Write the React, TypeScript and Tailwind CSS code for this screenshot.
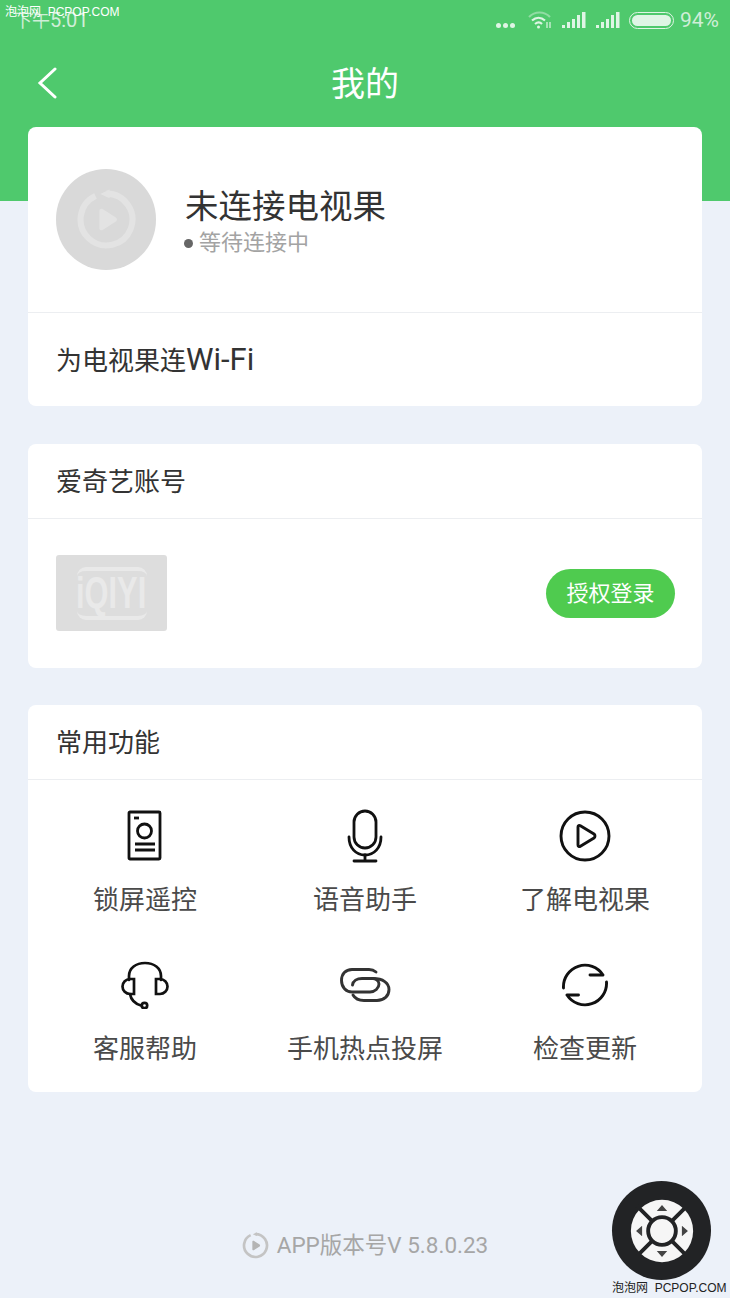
import React from 'react';

const cjk = "font-['Roboto','Noto_Sans_CJK_SC',sans-serif]";

function SignalIcon() {
  return (
    <svg width="24" height="16" viewBox="0 0 24 16" fill="#dff5e5">
      <rect x="0" y="13" width="3" height="3" />
      <rect x="5" y="10" width="3" height="6" />
      <rect x="10" y="7" width="3" height="9" />
      <rect x="15" y="3" width="3" height="13" />
      <rect x="20" y="0" width="3.5" height="16" />
    </svg>
  );
}

function LockRemoteIcon() {
  return (
    <svg width="36" height="52" viewBox="0 0 36 52" fill="none" stroke="#111" strokeWidth="2.8">
      <rect x="2" y="2" width="31" height="47" rx="1" />
      <path d="M7 8h5" />
      <circle cx="17.500" cy="21" r="7" />
      <path d="M8 34h20M8 40h20" />
    </svg>
  );
}

function MicIcon() {
  return (
    <svg width="36" height="54" viewBox="0 0 36 54" fill="none" stroke="#111" strokeWidth="2.8" strokeLinecap="round">
      <rect x="7" y="2" width="22" height="37" rx="11" />
      <path d="M2 28c0 11 7 18 16 18s16-7 16-18" />
      <path d="M18 46v6M7 52h22" />
    </svg>
  );
}

function PlayCircleIcon() {
  return (
    <svg width="52" height="52" viewBox="0 0 52 52" fill="none" stroke="#111" strokeWidth="2.9" strokeLinejoin="round">
      <circle cx="26" cy="26" r="24" />
      <path d="M19 17c0-1.500 1.200-2 2.400-1.300L35 24c1.300.9 1.300 3 0 4l-13.600 8.300c-1.200.7-2.400.2-2.400-1.300z" />
    </svg>
  );
}

function HeadsetIcon() {
  return (
    <svg width="48" height="48" viewBox="0 0 48 48" fill="none" stroke="#111" strokeWidth="2.7" strokeLinecap="round">
      <path d="M8 19v-4C8 7 15 2 24 2s16 5 16 13v4" />
      <path d="M13 18H9a7.500 7.500 0 0 0 0 15h4z" />
      <path d="M35 18h4a7.500 7.500 0 0 1 0 15h-4z" />
      <path d="M9 33c1 6 6 10 11 11.500" />
      <circle cx="23.500" cy="44.500" r="2.700" />
    </svg>
  );
}

function LinkIcon() {
  return (
    <svg width="51" height="35" viewBox="0 0 51 35" fill="none" stroke="#333" strokeWidth="2.9" strokeLinecap="round">
      <path d="M36 4c-2-1.700-4-2.500-7-2.500H12C5.500 1.500 1.500 6 1.500 12.500S6 24 12 24h18c5 0 9-4 9-8 0-3-3-5.500-6-5.500H22c-5 0-9 2.500-9.500 6.500" />
      <path d="M33 10.500c10 0 16 4.500 16 11s-5 11-12 11H24c-5 0-9-2-11-5.500" />
    </svg>
  );
}

function RefreshIcon() {
  return (
    <svg width="46" height="46" viewBox="0 0 46 46" fill="none" stroke="#111" strokeWidth="2.9" strokeLinecap="round" strokeLinejoin="round">
      <path d="M1.500 26A21.500 21.500 0 0 1 41 13H28" />
      <path d="M44.500 20A21.500 21.500 0 0 1 5 33H16.500" />
    </svg>
  );
}

function RingLogo({ size, ring, play }: { size: number; ring: string; play: string }) {
  return (
    <svg width={size} height={size} viewBox="0 0 60 60" fill="none">
      <path d="M30 4.500A25.500 25.500 0 1 1 19.200 6.900" stroke={ring} strokeWidth="6" />
      <path d="M33 0.500V9L24 5z" fill={ring} />
      <path d="M23 21.500c0-1.700 1.800-2.700 3.200-1.800l13 8.300c1.400.9 1.400 3.100 0 4l-13 8.300c-1.400.9-3.200-.1-3.200-1.800z" fill={play} />
    </svg>
  );
}

function IqiyiLogo() {
  return (
    <div className="w-[111px] h-[76px] rounded-[3px] bg-[#dddddd] flex items-center justify-center">
      <div className="w-[70px] h-[53px] rounded-[9px] border-y-[4px] border-[#e9e9e9] flex items-center justify-center overflow-hidden">
        <span className="font-['Liberation_Sans',sans-serif] font-bold text-[44px] leading-none text-[#e9e9e9] scale-x-[0.7]">iQIYI</span>
      </div>
    </div>
  );
}

function RemoteButton() {
  return (
    <div className="w-[99px] h-[99px] rounded-full bg-[#222325] flex items-center justify-center">
      <svg width="64" height="64" viewBox="0 0 74 74">
        <circle cx="37" cy="37" r="36" fill="#f6f6f6" />
        <path d="M8 8L26 26M66 8L48 26M8 66L26 48M66 66L48 48" stroke="#222325" strokeWidth="4.500" />
        <circle cx="37" cy="37" r="16" fill="#f6f6f6" stroke="#222325" strokeWidth="4.500" />
        <path d="M37 7l6 7H31zM37 67l-6-7h12zM7 37l7-6v12zM67 37l-7 6V31z" fill="#444" />
      </svg>
    </div>
  );
}

const features = [
  { label: '锁屏遥控', icon: <LockRemoteIcon /> },
  { label: '语音助手', icon: <MicIcon /> },
  { label: '了解电视果', icon: <PlayCircleIcon /> },
  { label: '客服帮助', icon: <HeadsetIcon /> },
  { label: '手机热点投屏', icon: <LinkIcon /> },
  { label: '检查更新', icon: <RefreshIcon /> },
];

export default function App() {
  return (
    <div className={`relative w-[730px] h-[1298px] overflow-hidden bg-[#ecf1f9] ${cjk}`}>
      <div className="absolute top-0 left-0 w-full h-[201px] bg-[#4fc96d]" />

      <div className="relative flex flex-col">
        {/* status bar */}
        <div className="h-[42px] pt-[6px] pl-[14px] pr-[11px] flex items-start justify-between text-[#cfeed8]">
          <span className="text-[20px] leading-[28px]"><span className="text-[18px]">下午</span>5:01</span>
          <div className="flex items-center gap-[10px] h-[28px]">
            <div className="flex gap-[2px] mr-[3px] mt-[10px]">
              <span className="w-[5px] h-[5px] rounded-full bg-[#dff5e5]" />
              <span className="w-[5px] h-[5px] rounded-full bg-[#dff5e5]" />
              <span className="w-[5px] h-[5px] rounded-full bg-[#dff5e5]" />
            </div>
            <svg width="24" height="18" viewBox="0 0 24 18" fill="none" stroke="#dff5e5" strokeWidth="2.200">
              <path d="M1 6c6-6 15-6 21 0" opacity="0.45" />
              <path d="M4 9.500c4-3.500 9-3.500 13 0" />
              <path d="M7 13c2.500-2 5-2 7 0" />
              <circle cx="10.500" cy="16" r="1.500" fill="#dff5e5" stroke="none" />
              <path d="M19 11v6M22 11v6" strokeWidth="1.200" />
            </svg>
            <SignalIcon />
            <SignalIcon />
            <div className="w-[45px] h-[17px] rounded-full border border-[#dff5e5] p-[2px] -ml-[1px]">
              <div className="w-[39px] h-full rounded-full bg-[#dff5e5]" />
            </div>
            <span className="text-[21px] leading-[28px] -ml-[4px]">94%</span>
          </div>
        </div>

        {/* title bar */}
        <div className="h-[85px] relative flex items-center justify-center pb-[2px]">
          <svg className="absolute left-[37px] top-[25px]" width="20" height="32" viewBox="0 0 20 32" fill="none" stroke="#fff" strokeWidth="3" strokeLinecap="round">
            <path d="M18 2L3 16l15 14" />
          </svg>
          <h1 className="text-[34px] leading-[40px] text-white">我的</h1>
        </div>

        <div className="px-[28px] flex flex-col">
          {/* device card */}
          <section className="h-[279px] rounded-[8px] bg-white flex flex-col">
            <div className="h-[186px] shrink-0 border-b border-[#eceef1] flex items-start pt-[42px] pl-[28px] gap-[29px]">
              <div className="w-[100px] h-[101px] rounded-full bg-[#d9d9d9] flex items-center justify-center">
                <RingLogo size={61} ring="#e3e3e3" play="#e3e3e3" />
              </div>
              <div className="flex flex-col pt-[17px]">
                <div className="text-[33.500px] leading-[42px] text-[#333]">未连接电视果</div>
                <div className="flex items-center gap-[6px] text-[22px] leading-[30px] text-[#a3a3a3] ml-[-1px]">
                  <span className="w-[9px] h-[9px] rounded-full bg-[#666]" />
                  等待连接中
                </div>
              </div>
            </div>
            <div className="flex-1 flex items-center pl-[28px] pt-[2px] text-[26px] text-[#333]">
              <span>为电视果连<span className="text-[31px]">Wi-Fi</span></span>
            </div>
          </section>

          {/* iqiyi card */}
          <section className="mt-[38px] h-[224px] rounded-[8px] bg-white flex flex-col">
            <div className="h-[75px] shrink-0 border-b border-[#eceef1] flex items-center pl-[28px] pt-[3px] text-[26px] text-[#333]">爱奇艺账号</div>
            <div className="flex-1 flex items-center justify-between pl-[28px] pr-[27px] pb-[1px]">
              <IqiyiLogo />
              <button className="w-[129px] h-[49px] rounded-full bg-[#4fcb4f] text-white text-[22px]">授权登录</button>
            </div>
          </section>

          {/* common features */}
          <section className="mt-[37px] h-[387px] rounded-[8px] bg-white flex flex-col">
            <div className="h-[75px] shrink-0 border-b border-[#eceef1] flex items-center pl-[28px] pt-[3px] text-[26px] text-[#333]">常用功能</div>
            <div className="grid grid-cols-3 gap-y-[30px] px-[7px] pt-[18px]">
              {features.map((f) => (
                <div key={f.label} className="flex flex-col items-center">
                  <div className="h-[76px] flex items-center justify-center">{f.icon}</div>
                  <div className="text-[26px] leading-[34px] text-[#4a4a4a] mt-[9px]">{f.label}</div>
                </div>
              ))}
            </div>
          </section>

          {/* version */}
          <div className="mt-[134px] flex items-center justify-center gap-[8px] text-[#a6a6a6] text-[22.500px] leading-[38px]">
            <RingLogo size={27} ring="#c4c4c4" play="#b4b4b4" />
            APP版本号V 5.8.0.23
          </div>
        </div>
      </div>

      <div className="absolute left-[612px] top-[1181px]">
        <RemoteButton />
      </div>
      <div className="absolute top-[5px] left-[5px] text-[12px] leading-[14px] text-white font-['Liberation_Sans','Noto_Sans_CJK_SC',sans-serif] whitespace-nowrap">泡泡网&nbsp; PCPOP.COM</div>
      <div className="absolute left-[612px] top-[1281px] text-[12px] leading-[14px] text-[#222] font-['Liberation_Sans','Noto_Sans_CJK_SC',sans-serif] whitespace-nowrap">泡泡网&nbsp; PCPOP.COM</div>
    </div>
  );
}
